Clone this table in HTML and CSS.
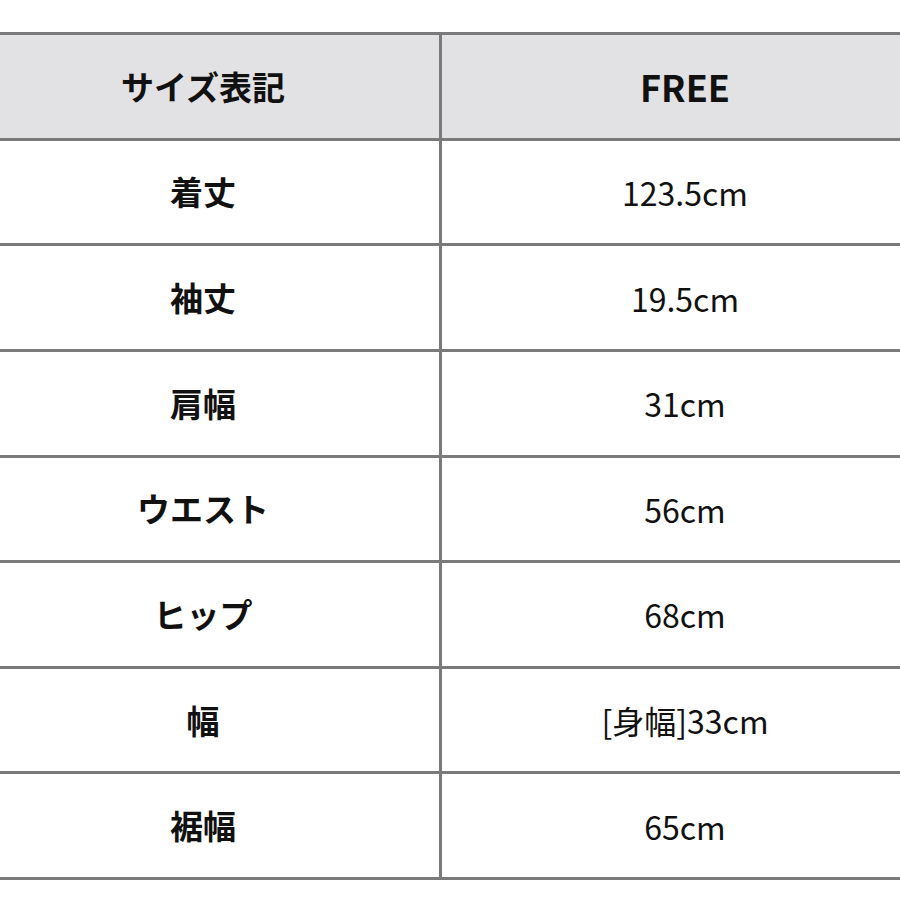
FILE: index.html
```html
<!DOCTYPE html>
<html lang="ja">
<head>
<meta charset="utf-8">
<title>サイズ表</title>
<link rel="stylesheet" href="styles.css">
</head>
<body>
<div class="size-table">
  <div class="cell head label">サイズ表記</div>
  <div class="cell head value">FREE</div>
  <div class="cell label">着丈</div>
  <div class="cell value">123.5cm</div>
  <div class="cell label">袖丈</div>
  <div class="cell value">19.5cm</div>
  <div class="cell label">肩幅</div>
  <div class="cell value">31cm</div>
  <div class="cell label">ウエスト</div>
  <div class="cell value">56cm</div>
  <div class="cell label">ヒップ</div>
  <div class="cell value">68cm</div>
  <div class="cell label">幅</div>
  <div class="cell value">[身幅]33cm</div>
  <div class="cell label">裾幅</div>
  <div class="cell value">65cm</div>
</div>
</body>
</html>
```
FILE: styles.css
```css
html, body {
  margin: 0;
  padding: 0;
  background: #ffffff;
  overflow: hidden;
}
body {
  width: 900px;
  height: 900px;
  font-family: "Noto Sans CJK JP", "Noto Sans", sans-serif;
  color: #111111;
}
.size-table {
  margin-top: 32px;
  margin-left: -33px;
  width: 963px;
  height: 848px;
  display: grid;
  grid-template-columns: 472px 486px;
  grid-template-rows: repeat(8, 1fr);
  column-gap: 3px;
  row-gap: 3px;
  padding: 3px 0;
  box-sizing: border-box;
  background: #7a7a7a;
}
.cell {
  background: #ffffff;
  display: flex;
  align-items: center;
  justify-content: center;
  line-height: 1;
}
.cell.head {
  background: #e2e1e3;
}
.label {
  font-size: 33px;
  font-weight: 700;
}
.value {
  font-size: 32px;
  font-weight: 400;
}
.head.value {
  font-size: 36px;
  font-weight: 700;
}
```
